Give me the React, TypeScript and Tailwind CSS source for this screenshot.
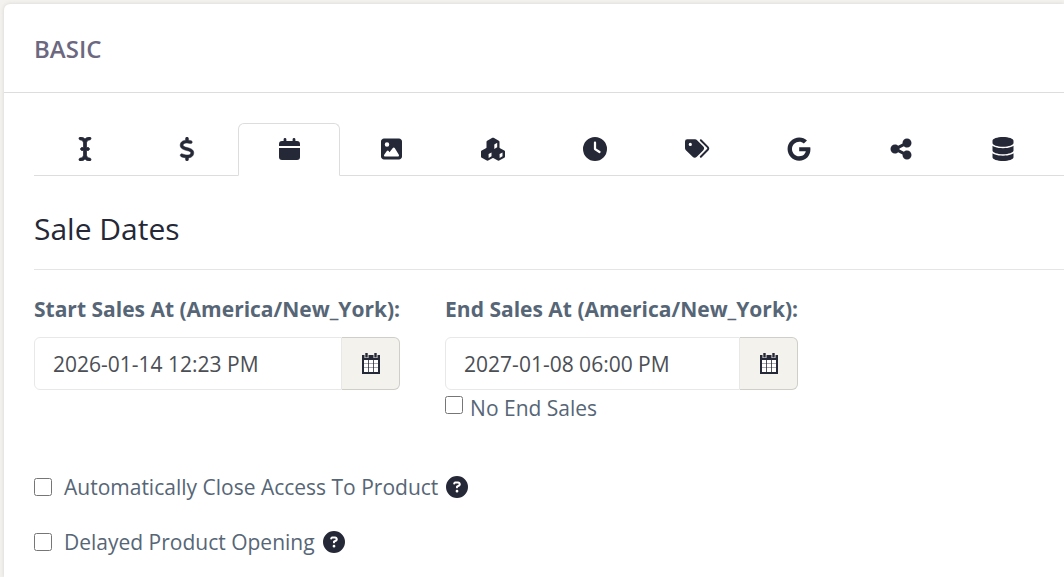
import { useState } from 'react'
import type { ReactNode } from 'react'
import {
  FaCircleQuestion,
  FaClock,
  FaDatabase,
  FaDollarSign,
  FaGoogle,
  FaICursor,
  FaShareNodes,
} from 'react-icons/fa6'

function ImageIcon() {
  return (
    <svg viewBox="0 0 448 512" height="24" width="21" fill="currentColor" aria-hidden="true">
      <path
        fillRule="evenodd"
        d="M64 32C28.700 32 0 60.700 0 96V416c0 35.300 28.700 64 64 64H384c35.300 0 64-28.700 64-64V96c0-35.300-28.700-64-64-64H64zm64 80a48 48 0 1 1 0 96 48 48 0 1 1 0-96zm144 112c8.400 0 16.100 4.400 20.500 11.500l88 144c4.500 7.400 4.700 16.700.5 24.300S368.700 416 360 416H88c-8.900 0-17.200-5-21.300-12.900s-3.500-17.500 1.600-24.800l56-80c4.500-6.400 11.800-10.200 19.700-10.200s15.200 3.800 19.700 10.200l17.200 24.600 70.600-87.400c4.400-7.100 12.100-11.500 20.500-11.500z"
      />
    </svg>
  )
}

function DatesIcon() {
  return (
    <svg viewBox="0 0 21 24" width="21" height="24" fill="currentColor" aria-hidden="true">
      <path d="M6 1a1.400 1.400 0 0 1 1.400 1.400V4h6.200V2.400a1.400 1.400 0 0 1 2.800 0V4H18a3 3 0 0 1 3 3v2H0V7a3 3 0 0 1 3-3h1.600V2.400A1.400 1.400 0 0 1 6 1z" />
      <path d="M0 11h21v9a3 3 0 0 1-3 3H3a3 3 0 0 1-3-3z" />
    </svg>
  )
}

function CubesIcon() {
  return (
    <svg viewBox="0 0 24 24" width="24" height="24" fill="currentColor" aria-hidden="true">
      <g stroke="currentColor" strokeWidth="2.600" strokeLinejoin="round">
        <path d="M12 2l5.200 2.800v6.700L12 14.300l-5.200-2.800V4.800z" />
        <path d="M6.500 11.800l5.200 2.800v5L6.500 22.400l-5.200-2.800v-5z" />
        <path d="M17.500 11.800l5.200 2.800v5l-5.200 2.800-5.200-2.800v-5z" />
      </g>
      <g fill="white">
        <path d="M13.300 7.400l2.900-1.700v4.600l-2.900 1.700z" />
        <path d="M7.600 17l2.900-1.600v3.900L7.600 21z" />
        <path d="M18.600 17l2.900-1.600v3.900L18.600 21z" />
      </g>
    </svg>
  )
}

function TagsIcon() {
  return (
    <svg viewBox="0 0 25 24" width="25" height="24" fill="currentColor" aria-hidden="true">
      <path
        fillRule="evenodd"
        d="M0 4.500A2.200 2.200 0 0 1 2.200 2.300H10a3 3 0 0 1 2.100.9l6 6a3 3 0 0 1 0 4.200l-6.300 6.400a3 3 0 0 1-4.200 0l-6.700-6.600A3 3 0 0 1 0 11zM5.300 5.800a1.600 1.600 0 1 0 0 3.200 1.600 1.600 0 0 0 0-3.200z"
      />
      <path
        d="M15.800 3.300l6.900 6.800a1.900 1.900 0 0 1 0 2.700l-6.900 7"
        fill="none"
        stroke="currentColor"
        strokeWidth="2"
        strokeLinecap="round"
      />
    </svg>
  )
}

function GridCalendarIcon() {
  return (
    <svg viewBox="0 0 18 21" width="18" height="21" fill="none" stroke="currentColor" aria-hidden="true">
      <path d="M1 4v16h16V4z" fill="white" strokeWidth="2" />
      <path d="M0 2h18v5H0z" fill="currentColor" stroke="none" />
      <path d="M2 10.500h14M2 14.500h14" strokeWidth="1" opacity="0.4" />
      <path d="M6.500 7v12M11.500 7v12" strokeWidth="1" opacity="0.8" />
      <path d="M4.500 0v5M13.500 0v5" stroke="#f3f2ed" strokeWidth="4" />
      <path d="M4.500 0v4.500M13.500 0v4.500" strokeWidth="2.400" />
    </svg>
  )
}

const TABS: { label: string; icon: ReactNode }[] = [
  { label: 'Name', icon: <FaICursor size={24} stroke="currentColor" strokeWidth={16} /> },
  { label: 'Price', icon: <FaDollarSign size={24} stroke="currentColor" strokeWidth={10} /> },
  { label: 'Dates', icon: <DatesIcon /> },
  { label: 'Images', icon: <ImageIcon /> },
  { label: 'Inventory', icon: <CubesIcon /> },
  { label: 'Times', icon: <FaClock size={24} /> },
  { label: 'Tags', icon: <TagsIcon /> },
  { label: 'Google', icon: <FaGoogle size={24} /> },
  { label: 'Sharing', icon: <FaShareNodes size={24} /> },
  { label: 'Data', icon: <FaDatabase size={24} /> },
]

interface DateFieldProps {
  id: string
  label: string
  initial: string
  children?: ReactNode
}

function DateField({ id, label, initial, children }: DateFieldProps) {
  const [value, setValue] = useState(initial)

  return (
    <div>
      <label htmlFor={id} className="block font-bold">
        {label}
      </label>
      <div className="mt-3 flex h-[53px]">
        <input
          id={id}
          type="text"
          value={value}
          onChange={(e) => setValue(e.target.value)}
          className="w-0 min-w-0 flex-1 rounded-l-md border border-[#e8e8e8] px-[18px] text-[#4b4f55]"
        />
        <button
          type="button"
          aria-label="Open calendar"
          className="flex w-[58px] items-center justify-center rounded-r-md border border-l-0 border-[#cfcec8] bg-[#f3f2ed] text-[#252836]"
        >
          <GridCalendarIcon />
        </button>
      </div>
      {children}
    </div>
  )
}

function OptionRow({ id, label }: { id: string; label: string }) {
  return (
    <div className="flex items-center">
      <input id={id} type="checkbox" className="size-[18px] shrink-0" />
      <label htmlFor={id} className="ml-3">
        {label}
      </label>
      <button type="button" aria-label={`Help: ${label}`} className="ml-2 text-[#252836]">
        <FaCircleQuestion size={22} />
      </button>
    </div>
  )
}

export default function App() {
  const [active, setActive] = useState('Dates')

  return (
    <div className="min-h-screen bg-[#f3f2ef] pt-1 pl-1 font-['Open_Sans',sans-serif] text-[21px] leading-8 text-[#566676]">
      <section className="min-h-[calc(100vh-4px)] rounded-tl-md bg-white shadow-[0_0_4px_rgba(0,0,0,0.12)]">
        <header className="border-b border-[#dddddd] px-[30px] pt-[29px] pb-[27px]">
          <h1 className="text-2xl leading-8 font-semibold text-[#6c6880]">BASIC</h1>
        </header>
        <div className="pt-[30px] pl-[30px]">
          <div role="tablist" className="flex border-b border-[#dddddd]">
            {TABS.map((tab) => (
              <button
                key={tab.label}
                type="button"
                role="tab"
                aria-label={tab.label}
                aria-selected={active === tab.label}
                onClick={() => setActive(tab.label)}
                className={`-mb-px flex h-[53px] w-[102px] shrink-0 items-center justify-center rounded-t-md border pb-0.5 text-[#252836] ${
                  active === tab.label ? 'border-[#dddddd] border-b-white bg-white' : 'border-transparent'
                }`}
              >
                {tab.icon}
              </button>
            ))}
          </div>
          <h2 className="border-b border-[#e5e5e5] pt-[33px] pb-5 text-[30px] leading-10 text-[#252836]">Sale Dates</h2>
          <div className="flex items-start gap-[45px] pt-[23px]">
            <DateField id="start-sales" label="Start Sales At (America/New_York):" initial="2026-01-14 12:23 PM" />
            <DateField id="end-sales" label="End Sales At (America/New_York):" initial="2027-01-08 06:00 PM">
              <div className="flex items-start pt-0.5">
                <input id="no-end" type="checkbox" className="mt-1 size-[18px] shrink-0" />
                <label htmlFor="no-end" className="ml-[7px]">
                  No End Sales
                </label>
              </div>
            </DateField>
          </div>
          <div className="flex flex-col gap-[23px] pt-[47px] pb-4">
            <OptionRow id="auto-close" label="Automatically Close Access To Product" />
            <OptionRow id="delayed-opening" label="Delayed Product Opening" />
          </div>
        </div>
      </section>
    </div>
  )
}
